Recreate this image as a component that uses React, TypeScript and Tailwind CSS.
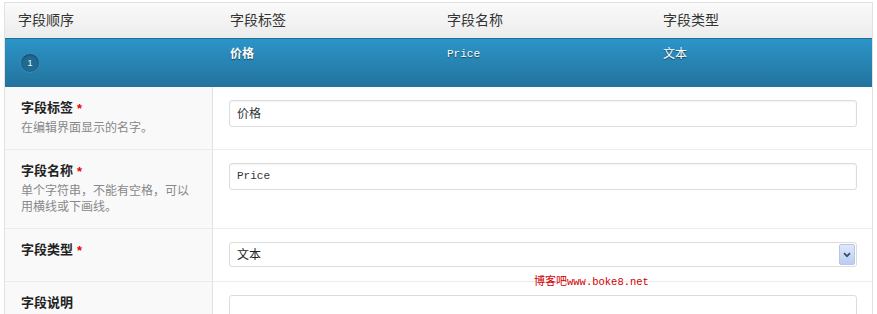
import React from 'react';

const cjk = { fontFamily: '"Liberation Sans", "Noto Sans CJK SC", sans-serif' };
const mono = { fontFamily: '"Liberation Mono", "DejaVu Sans Mono", monospace' };

function Req() {
  return <span className="ml-1 text-[#e00] text-[13px] leading-none">*</span>;
}

function FieldRow({
  label,
  required,
  desc,
  height,
  children,
}: {
  label: string;
  required?: boolean;
  desc?: React.ReactNode;
  height: string;
  children: React.ReactNode;
}) {
  return (
    <div className={`grid grid-cols-[208px_1fr] border-b border-[#ececec] ${height}`}>
      <div className="bg-[#f9f9f9] border-r border-[#e1e1e1] pl-4 pr-3 pt-[14px]">
        <div className="text-[13px] font-bold text-[#222] leading-[14px] flex items-center">
          {label}
          {required && <Req />}
        </div>
        {desc && <div className="mt-[5px] text-[12px] leading-[16px] text-[#888]">{desc}</div>}
      </div>
      <div className="pl-4 pr-[15px] pt-[13px]">{children}</div>
    </div>
  );
}

export default function App() {
  return (
    <div className="w-[877px] h-[314px] bg-white overflow-hidden pt-[2px] pl-[4px]" style={cjk}>
      <div className="w-[869px] border-l border-r border-t border-[#e1e1e1]">
        {/* header */}
        <div className="h-[35px] flex items-center text-[14px] text-[#333] bg-gradient-to-b from-[#fafafa] to-[#ececec]">
          <div className="w-[225px] pl-[13px]">字段顺序</div>
          <div className="w-[217px]">字段标签</div>
          <div className="w-[216px]">字段名称</div>
          <div className="flex-1">字段类型</div>
        </div>

        {/* active field bar */}
        <div className="h-[49px] flex border-t border-[#1f6f96] bg-gradient-to-b from-[#2b95c8] to-[#23739d] text-white">
          <div className="w-[225px] pl-[15px] pt-[14px]">
            <div className="w-[20px] h-[20px] rounded-full bg-[#1f6a92] border border-[#3a89b3] shadow-[inset_0_1px_2px_rgba(0,0,0,0.35)] flex items-center justify-center text-[9px] leading-none">
              1
            </div>
          </div>
          <div className="w-[217px] pt-[6px] text-[12px] font-bold [text-shadow:0_1px_1px_rgba(0,0,0,0.5)]">价格</div>
          <div className="w-[216px] pt-[7px] text-[11px] [text-shadow:0_1px_1px_rgba(0,0,0,0.5)]" style={mono}>
            Price
          </div>
          <div className="flex-1 pt-[6px] text-[12px] [text-shadow:0_1px_1px_rgba(0,0,0,0.5)]">文本</div>
        </div>

        <FieldRow label="字段标签" required desc="在编辑界面显示的名字。" height="h-[63px]">
          <div className="h-[27px] border border-[#dcdcdc] rounded-[3px] bg-white shadow-[inset_0_1px_2px_rgba(0,0,0,0.05)] flex items-center px-[7px] text-[12px] text-[#333]">
            价格
          </div>
        </FieldRow>

        <FieldRow
          label="字段名称"
          required
          desc={
            <>
              单个字符串，不能有空格，可以
              <br />
              用横线或下画线。
            </>
          }
          height="h-[79px]"
        >
          <div className="h-[27px] border border-[#dcdcdc] rounded-[3px] bg-white shadow-[inset_0_1px_2px_rgba(0,0,0,0.05)] flex items-center px-[7px] text-[11px] text-[#333]" style={mono}>
            Price
          </div>
        </FieldRow>

        <div className="relative">
          <FieldRow label="字段类型" required height="h-[53px]">
            <div className="h-[25px] border border-[#dcdcdc] rounded-[3px] bg-white flex items-center pl-[7px] pr-[1px] text-[12px] text-[#222]">
              <span className="flex-1">文本</span>
              <div className="w-[16px] h-[21px] rounded-[2px] border border-[#b7c6e4] bg-gradient-to-b from-[#dfe8fb] to-[#b9cdf2] flex items-center justify-center">
                <svg width="8" height="6" viewBox="0 0 8 6">
                  <path d="M1 1.2 L4 4.2 L7 1.2" stroke="#3d4f73" strokeWidth="1.8" fill="none" />
                </svg>
              </div>
            </div>
          </FieldRow>
          <div className="absolute left-[529px] top-[46px] text-[11px] text-[#d20000] leading-none" style={{ fontFamily: '"Noto Sans CJK SC", sans-serif' }}>
            博客吧<span style={mono} className="text-[10.5px]">www.boke8.net</span>
          </div>
        </div>

        <FieldRow label="字段说明" height="h-[60px]">
          <div className="h-[40px] border border-[#dcdcdc] rounded-[3px] bg-white" />
        </FieldRow>
      </div>
    </div>
  );
}
